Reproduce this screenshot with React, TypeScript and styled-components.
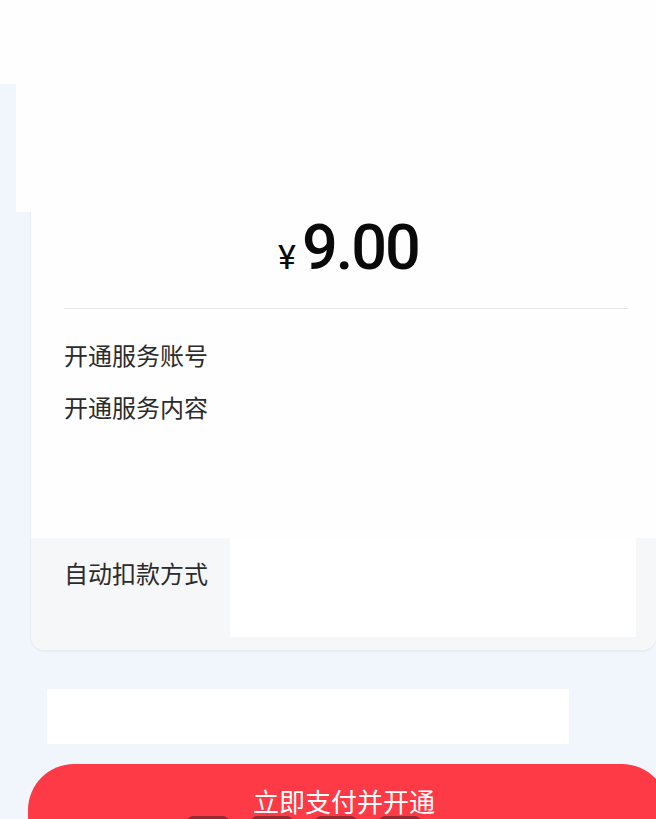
import React from "react";
import styled, { createGlobalStyle } from "styled-components";

const GlobalStyle = createGlobalStyle`
  html, body {
    margin: 0;
    padding: 0;
    overflow: hidden;
    background: #f1f6fc;
    font-family: "Noto Sans CJK SC", "Noto Sans", sans-serif;
  }
`;

const Page = styled.div`
  width: 656px;
  display: flex;
  flex-direction: column;
`;

const TopBar = styled.div`
  height: 84px;
  background: #fefefe;
`;

const Banner = styled.div`
  height: 128px;
  margin-left: 16px;
  background: #fefefe;
`;

const Card = styled.div`
  margin-left: 31px;
  width: 625px;
  height: 438px;
  background: #fefefe;
  border-radius: 0 0 14px 14px;
  box-shadow: 0 1px 0 1px #e9edf2;
  display: flex;
  flex-direction: column;
  overflow: hidden;
`;

const PriceRow = styled.div`
  height: 96px;
  box-sizing: border-box;
  padding: 0 0 0 10px;
  display: flex;
  justify-content: center;
  align-items: baseline;
  gap: 6px;
  font-family: Roboto, "DejaVu Sans", sans-serif;
  color: #0a0a0a;
  line-height: 72px;
`;

const Yen = styled.span`
  font-size: 34px;
  font-weight: 400;
`;

const Amount = styled.span`
  font-size: 63px;
  font-weight: 500;
  letter-spacing: -2px;
`;

const Divider = styled.div`
  height: 1px;
  margin: 0 28px 0 33px;
  background: #e3e6ea;
`;

const InfoList = styled.div`
  padding: 20px 0 0 33px;
  display: flex;
  flex-direction: column;
  flex: 1;
`;

const Label = styled.span`
  display: inline-block;
  align-self: flex-start;
  font-size: 24px;
  line-height: 52px;
  color: #2b2b2b;
`;

const PayRow = styled.div`
  height: 112px;
  background: #f6f7f9;
  display: flex;
`;

const PayLabelCell = styled.div`
  width: 199px;
  padding-left: 33px;
  box-sizing: border-box;
  padding-top: 9px;
`;

const PayPanel = styled.div`
  width: 406px;
  height: 99px;
  background: #ffffff;
`;

const Notice = styled.div`
  margin: 39px 0 0 47px;
  width: 522px;
  height: 55px;
  background: #ffffff;
`;

const SubmitButton = styled.button`
  margin: 20px 0 0 28px;
  width: 640px;
  height: 110px;
  border: none;
  border-radius: 46px;
  background: #fd3a46;
  color: #ffffff;
  font-family: "Noto Sans CJK SC", "Noto Sans", sans-serif;
  font-size: 26px;
  padding: 23px 0 0 0;
  display: flex;
  flex-direction: column;
  align-items: stretch;
`;

const ButtonText = styled.span`
  display: block;
  line-height: 28px;
  text-align: center;
  padding-right: 8px;
`;

const Dots = styled.div`
  display: flex;
  gap: 22px;
  padding-left: 159px;
  margin-top: 1px;
`;

const Dot = styled.span`
  width: 42px;
  height: 20px;
  border-radius: 6px;
  background: #9a2a31;
`;

export default function App() {
  return (
    <Page>
      <GlobalStyle />
      <TopBar />
      <Banner />
      <Card>
        <PriceRow>
          <Yen>¥</Yen>
          <Amount>9.00</Amount>
        </PriceRow>
        <Divider />
        <InfoList>
          <Label>开通服务账号</Label>
          <Label>开通服务内容</Label>
        </InfoList>
        <PayRow>
          <PayLabelCell>
            <Label>自动扣款方式</Label>
          </PayLabelCell>
          <PayPanel />
        </PayRow>
      </Card>
      <Notice />
      <SubmitButton>
        <ButtonText>立即支付并开通</ButtonText>
        <Dots>
          <Dot />
          <Dot />
          <Dot />
          <Dot />
        </Dots>
      </SubmitButton>
    </Page>
  );
}
